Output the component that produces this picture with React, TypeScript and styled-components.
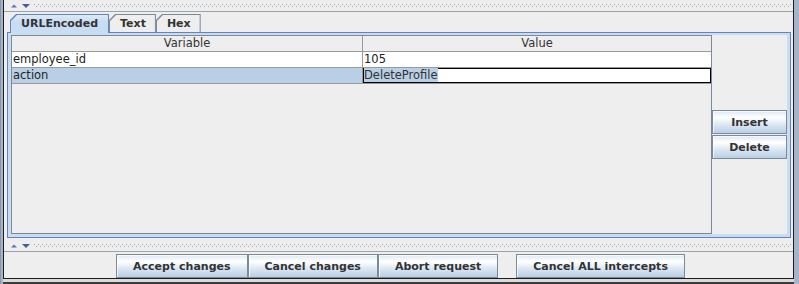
import React from 'react';
import styled, { createGlobalStyle } from 'styled-components';

type Param = { name: string; value: string; editing?: boolean };

const params: Param[] = [
  { name: 'employee_id', value: '105' },
  { name: 'action', value: 'DeleteProfile', editing: true },
];

const tabs = ['URLEncoded', 'Text', 'Hex'];

function DividerArrows() {
  return (
    <ArrowIcon width="20" height="5" viewBox="0 0 20 5">
      <path d="M1 4.5 L4 1.5 L7 4.5 Z" fill="#5676b0" />
      <path d="M12 1 H20 L16 5 Z" fill="#3f5f9c" />
    </ArrowIcon>
  );
}

export default function App() {
  return (
    <>
      <GlobalStyle />
      <Frame>
        <Window>
          <Divider $height={11}>
            <DividerArrows />
            <Grip />
          </Divider>
          <LowerPane>
            <TabRow>
              {tabs.map((t, i) => (
                <Tab key={t} $active={i === 0}>
                  <TabFace $active={i === 0}>{t}</TabFace>
                </Tab>
              ))}
            </TabRow>
            <TabBody>
              <TableScroll>
                <HeaderRow>
                  <HeaderCell>Variable</HeaderCell>
                  <HeaderCell>Value</HeaderCell>
                </HeaderRow>
                {params.map(p => (
                  <Row key={p.name}>
                    <Cell $selected={p.editing}>{p.name}</Cell>
                    {p.editing ? (
                      <EditorCell><Selection>{p.value}</Selection></EditorCell>
                    ) : (
                      <Cell>{p.value}</Cell>
                    )}
                  </Row>
                ))}
              </TableScroll>
              <SidePanel>
                <PushButton $fill>Insert</PushButton>
                <PushButton $fill>Delete</PushButton>
              </SidePanel>
            </TabBody>
          </LowerPane>
          <Divider $height={13}>
            <DividerArrows />
            <Grip />
          </Divider>
          <ButtonBar>
            <PushButton>Accept changes</PushButton>
            <PushButton>Cancel changes</PushButton>
            <PushButton>Abort request</PushButton>
            <PushButton $gapBefore>Cancel ALL intercepts</PushButton>
          </ButtonBar>
        </Window>
        <BelowStrip />
      </Frame>
    </>
  );
}

const GlobalStyle = createGlobalStyle`
  html, body {
    margin: 0;
    padding: 0;
    background: #eeeeee;
  }
  body {
    font-family: "DejaVu Sans", Verdana, sans-serif;
  }
`;

const Frame = styled.div`
  width: 799px;
  height: 284px;
  box-sizing: border-box;
  display: flex;
  flex-direction: column;
  padding: 0 5px 0 3px;
  background: #a6b4c7;
  border-left: 1px solid #8595ad;
  padding-left: 2px;
  overflow: hidden;
`;

const Window = styled.div`
  height: 279px;
  box-sizing: border-box;
  display: flex;
  flex-direction: column;
  background: #eeeeee;
  border: 1px solid #1c1c1c;
  border-top: none;
`;

const BelowStrip = styled.div`
  flex: 1;
  background: #dadada;
  border-bottom: 2px solid #3c3c3c;
`;

const Divider = styled.div<{ $height: number }>`
  height: ${p => p.$height}px;
  box-sizing: border-box;
  display: flex;
  align-items: flex-end;
  padding: 0 2px 3px 6px;
`;

const ArrowIcon = styled.svg`
  display: block;
  flex: none;
`;

const Grip = styled.div`
  flex: 1;
  height: 3px;
  margin: 0 0 1px 4px;
  background-image:
    repeating-linear-gradient(to right, #98a6ba 0 1px, transparent 1px 4px),
    repeating-linear-gradient(to right, transparent 0 2px, #98a6ba 2px 3px, transparent 3px 4px);
  background-size: 100% 1px, 100% 1px;
  background-position: 0 0, 0 2px;
  background-repeat: no-repeat;
`;

const LowerPane = styled.div`
  border-top: 1px solid #a2a2a2;
  padding: 2px 2px 0 3px;
  display: flex;
  flex-direction: column;
`;

const TabRow = styled.div`
  height: 18px;
  display: flex;
  align-items: flex-end;
  padding-left: 3px;
`;

const Tab = styled.div<{ $active?: boolean }>`
  position: relative;
  z-index: ${p => (p.$active ? 1 : 0)};
  height: ${p => (p.$active ? 19 : 18)}px;
  margin-bottom: ${p => (p.$active ? -1 : 0)}px;
  box-sizing: border-box;
  padding: 1px 1px 0 1px;
  background: ${p => (p.$active ? '#6382bf' : '#7a8a99')};
  clip-path: polygon(0 6px, 6px 0, 100% 0, 100% 100%, 0 100%);
`;

const TabFace = styled.div<{ $active?: boolean }>`
  height: 100%;
  box-sizing: border-box;
  display: flex;
  align-items: center;
  justify-content: center;
  padding: ${p => (p.$active ? '0 10px 1px' : '0 9px 0 10px')};
  background: ${p => (p.$active ? 'linear-gradient(#dde9f5, #c8ddf2 40%)' : '#eeeeee')};
  clip-path: polygon(0 6px, 6px 0, 100% 0, 100% 100%, 0 100%);
  font-size: 11px;
  font-weight: bold;
  color: #333333;
  white-space: nowrap;
`;

const TabBody = styled.div`
  height: 206px;
  box-sizing: border-box;
  display: flex;
  border: 1px solid #6382bf;
  padding: 2px 3px 3px 3px;
  background: #c8ddf2;
`;

const TableScroll = styled.div`
  width: 701px;
  box-sizing: border-box;
  border: 1px solid #7a8a99;
  background: #eeeeee;
  font-size: 11.5px;
  color: #222222;
`;

const HeaderRow = styled.div`
  display: grid;
  grid-template-columns: 351px 1fr;
  height: 16px;
  box-sizing: border-box;
  border-bottom: 1px solid #9a9a9a;
  background: #eeeeee;
`;

const HeaderCell = styled.div`
  line-height: 15px;
  text-align: center;
  color: #333333;
  &:first-child {
    border-right: 1px solid #9a9a9a;
  }
`;

const Row = styled.div`
  display: grid;
  grid-template-columns: 351px 1fr;
  height: 16px;
  box-sizing: border-box;
  border-bottom: 1px solid #9a9a9a;
`;

const Cell = styled.div<{ $selected?: boolean }>`
  line-height: 15px;
  padding-left: 1px;
  white-space: nowrap;
  background: ${p => (p.$selected ? '#b8cfe5' : '#ffffff')};
  &:first-child {
    border-right: 1px solid #9a9a9a;
  }
`;

const EditorCell = styled.div`
  line-height: 15px;
  padding-left: 1px;
  background: #ffffff;
  box-shadow: inset 0 0 0 1px #000000;
  white-space: nowrap;
`;

const Selection = styled.span`
  background: #b8cfe5;
  color: #333333;
`;

const SidePanel = styled.div`
  flex: 1;
  display: flex;
  flex-direction: column;
  justify-content: center;
  gap: 1px;
  background: #eeeeee;
`;

const PushButton = styled.button<{ $fill?: boolean; $gapBefore?: boolean }>`
  height: 24px;
  box-sizing: border-box;
  margin: 0 0 0 ${p => (p.$gapBefore ? 18 : 0)}px;
  padding: ${p => (p.$fill ? '0' : '0 16px')};
  width: ${p => (p.$fill ? '100%' : 'auto')};
  border: 1px solid #7a8a99;
  border-radius: 0;
  box-shadow: inset 1px 1px 0 rgba(255, 255, 255, 0.7);
  background: linear-gradient(
    to bottom,
    #dde8f3 0%,
    #ffffff 30%,
    #dde8f3 60%,
    #b8cfe5 100%
  );
  font-family: "DejaVu Sans", Verdana, sans-serif;
  font-size: 11px;
  font-weight: bold;
  color: #333333;
  white-space: nowrap;
  flex: none;
`;

const ButtonBar = styled.div`
  height: 27px;
  box-sizing: border-box;
  border-top: 1px solid #a2a2a2;
  display: flex;
  justify-content: center;
  align-items: flex-start;
  padding: 2px 0 0 4px;
`;
